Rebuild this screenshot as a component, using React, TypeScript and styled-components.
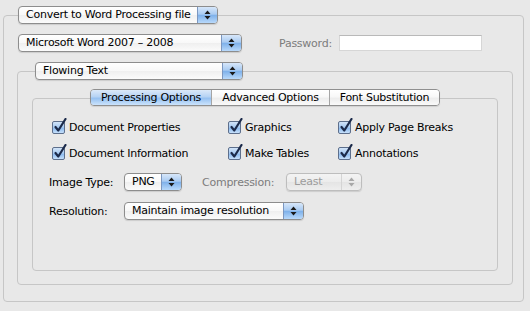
import React from 'react'
import styled, { createGlobalStyle, css } from 'styled-components'

const GlobalStyle = createGlobalStyle`
    body {
        margin:0;
        background:#e8e8e8;
        font-family:"Lucida Grande","DejaVu Sans",sans-serif;
        font-size:11px;
        letter-spacing:-0.25px;
        color:#000;
    }
`

const Page = styled.div`
    padding:6px 0 0 3px;
`
const Group = styled.div<{ $w: number; $ml?: number; $mt?: number }>`
    display:flex;
    flex-direction:column;
    width:${p => p.$w}px;
    margin-left:${p => p.$ml || 0}px;
    margin-top:${p => p.$mt || 0}px;
`
const GroupHead = styled.div<{ $pl: number }>`
    display:flex;
    padding-left:${p => p.$pl}px;
    position:relative;
    z-index:1;
    height:18px;
`
const GroupBox = styled.div<{ $h: number; $pad: string }>`
    box-sizing:border-box;
    margin-top:-9px;
    height:${p => p.$h}px;
    border:1px solid #c6c6c6;
    border-radius:4px;
    padding:${p => p.$pad};
    display:flex;
    flex-direction:column;
`
const Row = styled.div`
    display:flex;
    align-items:center;
    height:18px;
`
const FieldLabel = styled.span<{ $dim?: boolean; $w?: number; $ml?: number }>`
    color:${p => (p.$dim ? '#7c7c7c' : '#000')};
    width:${p => (p.$w ? p.$w + 'px' : 'auto')};
    margin-left:${p => p.$ml || 0}px;
    white-space:nowrap;
`
const PasswordInput = styled.div`
    box-sizing:border-box;
    width:143px;
    height:16px;
    background:#fff;
    border:1px solid #d6d6d6;
    border-top-color:#b9b9b9;
`

const PopupBox = styled.div<{ $w: number; $disabled?: boolean }>`
    box-sizing:border-box;
    display:flex;
    width:${p => p.$w}px;
    height:18px;
    border:1px solid ${p => (p.$disabled ? '#bdbdbd' : '#8d8d8d')};
    border-radius:4px;
    overflow:hidden;
    background:${p => (p.$disabled
        ? 'linear-gradient(#f3f3f3,#ececec 50%,#e4e4e4 51%,#eeeeee)'
        : 'linear-gradient(#ffffff,#f8f8f8 50%,#efefef 51%,#fbfbfb)')};
    box-shadow:0 1px 1px rgba(0,0,0,0.12);
`
const PopupText = styled.span<{ $disabled?: boolean }>`
    flex:1;
    padding-left:7px;
    line-height:16px;
    white-space:nowrap;
    overflow:hidden;
    color:${p => (p.$disabled ? '#9c9c9c' : '#000')};
`
const Stepper = styled.span<{ $disabled?: boolean }>`
    width:19px;
    flex:none;
    display:flex;
    align-items:center;
    justify-content:center;
    ${p => p.$disabled
        ? css`border-left:1px solid #d4d4d4;`
        : css`
            border-left:1px solid #7c97c0;
            background:linear-gradient(#d7e7fa,#a9cbf2 45%,#7fb1ea 52%,#b8d9fb);
        `}
`

const Popup = ({ w, text, disabled }: { w: number; text: string; disabled?: boolean }) => (
    <PopupBox $w={w} $disabled={disabled}>
        <PopupText $disabled={disabled}>{text}</PopupText>
        <Stepper $disabled={disabled}>
            <svg width="7" height="10" viewBox="0 0 7 10">
                <path d="M3.5 0.5 L6.5 4 L0.5 4 Z M0.5 6 L6.5 6 L3.5 9.5 Z" fill={disabled ? '#a8a8a8' : '#1a1a1a'} />
            </svg>
        </Stepper>
    </PopupBox>
)

const TabArea = styled.div`
    display:flex;
    flex-direction:column;
    align-items:center;
`
const TabBar = styled.div`
    display:flex;
    height:17px;
    position:relative;
    z-index:1;
    border:1px solid #8f8f8f;
    border-radius:4px;
    overflow:hidden;
    box-sizing:border-box;
    box-shadow:0 1px 1px rgba(0,0,0,0.1);
`
const Tab = styled.div<{ $w: number; $active?: boolean }>`
    width:${p => p.$w}px;
    text-align:center;
    line-height:15px;
    white-space:nowrap;
    &:not(:first-child) {
        border-left:1px solid #a5a5a5;
    }
    background:${p => (p.$active
        ? 'linear-gradient(#dbe9f9,#b3d1f4 48%,#93bff0 53%,#cbe3fc)'
        : 'linear-gradient(#ffffff,#f7f7f7 48%,#ececec 53%,#fafafa)')};
`
const TabBox = styled.div`
    box-sizing:border-box;
    width:466px;
    height:173px;
    margin-top:-8px;
    border:1px solid #c6c6c6;
    border-radius:4px;
    padding:20px 0 0 19px;
    display:flex;
    flex-direction:column;
`
const CheckGrid = styled.div`
    display:grid;
    grid-template-columns:176px 110px auto;
    grid-auto-rows:16px;
    row-gap:10px;
`
const CheckItem = styled.label`
    display:flex;
    align-items:center;
    gap:4px;
    white-space:nowrap;
`
const CheckBox = styled.span`
    box-sizing:border-box;
    position:relative;
    flex:none;
    width:13px;
    height:13px;
    border:1px solid #5d6f8c;
    border-radius:2px;
    background:linear-gradient(#d2e4f8,#a3c8f1 50%,#8ab9ee 55%,#c6e0fb);
    & svg {
        position:absolute;
        left:0;
        top:-4px;
    }
`
const Check = () => (
    <CheckBox>
        <svg width="14" height="15" viewBox="0 0 14 15">
            <path d="M2.5 9 L5.3 12.5 L12.5 1" fill="none" stroke="#1b2a4a" strokeWidth="2.2" strokeLinecap="round" strokeLinejoin="round" />
        </svg>
    </CheckBox>
)

const OptionRow = styled(Row)<{ $mt: number }>`
    margin-top:${p => p.$mt}px;
    margin-left:-3px;
`

const checks = [
    'Document Properties', 'Graphics', 'Apply Page Breaks',
    'Document Information', 'Make Tables', 'Annotations',
]

const App = () => {
    return (
        <Page>
            <GlobalStyle />
            <Group $w={521}>
                <GroupHead $pl={15}>
                    <Popup w={200} text="Convert to Word Processing file" />
                </GroupHead>
                <GroupBox $h={287} $pad="18px 14px 0 14px">
                    <Row>
                        <Popup w={224} text="Microsoft Word 2007 – 2008" />
                        <FieldLabel $dim $ml={37} $w={60}>Password:</FieldLabel>
                        <PasswordInput />
                    </Row>
                    <Group $w={496} $ml={-1} $mt={10}>
                        <GroupHead $pl={18}>
                            <Popup w={208} text="Flowing Text" />
                        </GroupHead>
                        <GroupBox $h={214} $pad="17px 14px 0 14px">
                            <TabArea>
                                <TabBar>
                                    <Tab $w={120} $active>Processing Options</Tab>
                                    <Tab $w={117}>Advanced Options</Tab>
                                    <Tab $w={109}>Font Substitution</Tab>
                                </TabBar>
                                <TabBox>
                                    <CheckGrid>
                                        {checks.map((c, i) => (
                                            <CheckItem key={i}>
                                                <Check />
                                                {c}
                                            </CheckItem>
                                        ))}
                                    </CheckGrid>
                                    <OptionRow $mt={12}>
                                        <FieldLabel $w={75}>Image Type:</FieldLabel>
                                        <Popup w={58} text="PNG" />
                                        <FieldLabel $dim $ml={20} $w={84}>Compression:</FieldLabel>
                                        <Popup w={76} text="Least" disabled />
                                    </OptionRow>
                                    <OptionRow $mt={11}>
                                        <FieldLabel $w={75}>Resolution:</FieldLabel>
                                        <Popup w={180} text="Maintain image resolution" />
                                    </OptionRow>
                                </TabBox>
                            </TabArea>
                        </GroupBox>
                    </Group>
                </GroupBox>
            </Group>
        </Page>
    )
}

export default App
